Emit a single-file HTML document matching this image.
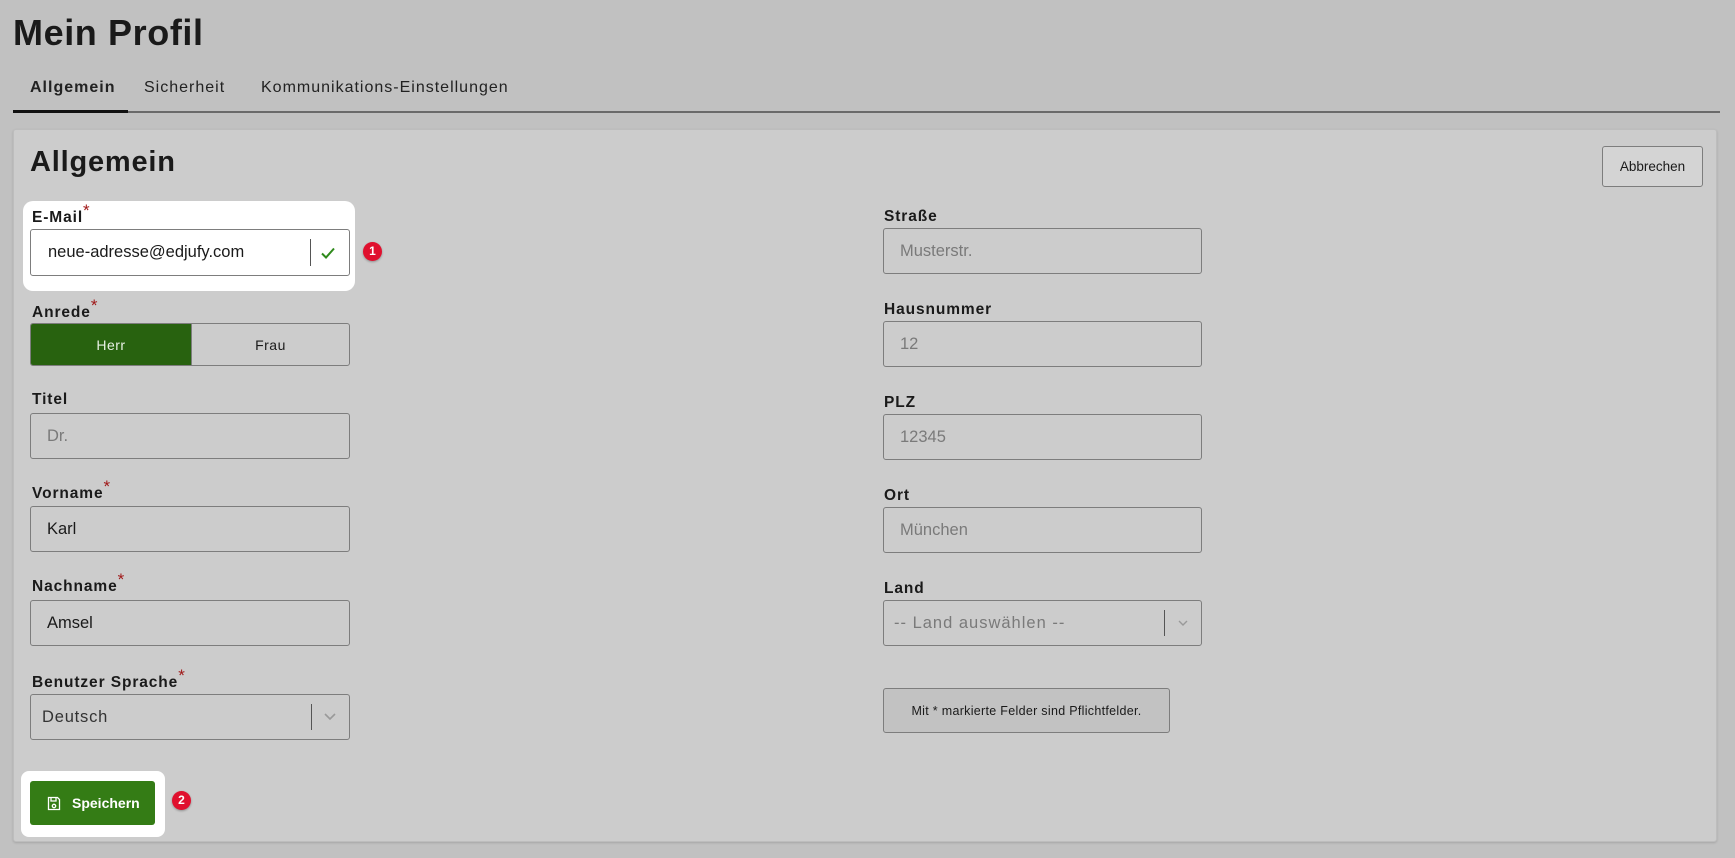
<!DOCTYPE html>
<html><head><meta charset="utf-8"><style>
*{box-sizing:border-box;margin:0;padding:0}
body{width:1735px;height:858px;background:#c1c1c1;font-family:"Liberation Sans",Arial,sans-serif;color:#1a1a1a;position:relative;overflow:hidden}
.a{position:absolute}
h1{position:absolute;left:13px;top:12px;font-size:36px;font-weight:bold;letter-spacing:0.6px}
.tab{position:absolute;top:79px;font-size:16px;color:#222;letter-spacing:1px}
.card{position:absolute;left:13px;top:129px;width:1704px;height:713px;background:#cccccc;border:1px solid #bdbdbd;border-radius:3px;box-shadow:0 1px 2px rgba(0,0,0,.15)}
h2{position:absolute;left:30px;top:146px;font-size:29px;font-weight:bold;letter-spacing:0.8px}
.lbl{position:absolute;font-size:15.5px;font-weight:bold;letter-spacing:.9px;transform:translateY(-50%)}
.lbl i{color:#a01818;font-style:normal;font-weight:normal;position:relative;top:-6px;font-size:17px;letter-spacing:0}
.inp{position:absolute;border:1px solid #7d7d7d;border-radius:3px;font-size:16.5px;color:#7a7a7a;padding-left:16px;display:flex;align-items:center}
.dark{color:#1a1a1a}
.badge{position:absolute;width:19px;height:19px;border-radius:50%;background:#e0102e;color:#fff;font-size:12px;font-weight:bold;text-align:center;line-height:19px;box-shadow:0 1px 2px rgba(0,0,0,.3)}
.sep{position:absolute;top:9px;bottom:9px;width:1px;background:#555}
</style></head><body>
<h1>Mein Profil</h1>
<div class="tab" style="left:30px;font-weight:bold">Allgemein</div>
<div class="tab" style="left:144px">Sicherheit</div>
<div class="tab" style="left:261px">Kommunikations-Einstellungen</div>
<div class="a" style="left:13px;top:111px;width:1707px;height:2px;background:#6a6a6a"></div>
<div class="a" style="left:13px;top:110px;width:115px;height:3px;background:#111"></div>

<div class="card"></div>
<h2>Allgemein</h2>
<div class="a" style="left:1602px;top:146px;width:101px;height:41px;border:1px solid #7d7d7d;border-radius:3px;background:#d4d4d4;font-size:13.5px;display:flex;align-items:center;justify-content:center">Abbrechen</div>

<div class="a" style="left:23px;top:201px;width:332px;height:90px;background:#fff;border-radius:10px"></div>
<div class="lbl" style="left:32px;top:217px">E-Mail<i>*</i></div>
<div class="inp dark" style="left:30px;top:229px;width:320px;height:47px;background:#fff;padding-left:17px">neue-adresse@edjufy.com
<div class="sep" style="left:279px"></div>
<svg class="a" style="left:288px;top:15px" width="18" height="16" viewBox="0 0 18 16"><path d="M3 8.5l4 4 8-9" fill="none" stroke="#2f8a1c" stroke-width="2"/></svg></div>
<div class="badge" style="left:363px;top:242px">1</div>

<div class="lbl" style="left:32px;top:312px">Anrede<i>*</i></div>
<div class="a" style="left:30px;top:323px;width:320px;height:43px;border:1px solid #7d7d7d;border-radius:3px;overflow:hidden;display:flex;font-size:14px;letter-spacing:.5px">
<div style="width:160px;background:#28620f;color:#e8f0e4;display:flex;align-items:center;justify-content:center">Herr</div>
<div style="flex:1;display:flex;align-items:center;justify-content:center;border-left:1px solid #7d7d7d">Frau</div></div>

<div class="lbl" style="left:32px;top:400px">Titel</div>
<div class="inp" style="left:30px;top:413px;width:320px;height:46px">Dr.</div>
<div class="lbl" style="left:32px;top:493px">Vorname<i>*</i></div>
<div class="inp dark" style="left:30px;top:506px;width:320px;height:46px">Karl</div>
<div class="lbl" style="left:32px;top:586px">Nachname<i>*</i></div>
<div class="inp dark" style="left:30px;top:600px;width:320px;height:46px">Amsel</div>
<div class="lbl" style="left:32px;top:682px">Benutzer Sprache<i>*</i></div>
<div class="inp" style="left:30px;top:694px;width:320px;height:46px;color:#333;padding-left:11px;letter-spacing:.8px">Deutsch
<div class="sep" style="left:280px"></div>
<svg class="a" style="left:292px;top:17px" width="14" height="10" viewBox="0 0 14 10"><path d="M2 2l5 5 5-5" fill="none" stroke="#999" stroke-width="1.6"/></svg></div>

<div class="a" style="left:21px;top:771px;width:144px;height:66px;background:#fff;border-radius:8px"></div>
<div class="a" style="left:30px;top:781px;width:125px;height:44px;background:#347c15;border-radius:3px;color:#fff;font-size:14px;font-weight:bold;display:flex;align-items:center;padding-left:17px">
<svg width="14" height="15" viewBox="0 0 14 15" style="margin-right:11px"><path d="M1.5 1.5h9l2 2v10h-11z M4 1.5v3.5h5v-3.5" fill="none" stroke="#fff" stroke-width="1.3"/><circle cx="7" cy="10" r="1.7" fill="none" stroke="#fff" stroke-width="1.3"/></svg>Speichern</div>
<div class="badge" style="left:172px;top:791px">2</div>

<div class="lbl" style="left:884px;top:217px">Straße</div>
<div class="inp" style="left:883px;top:228px;width:319px;height:46px">Musterstr.</div>
<div class="lbl" style="left:884px;top:310px">Hausnummer</div>
<div class="inp" style="left:883px;top:321px;width:319px;height:46px">12</div>
<div class="lbl" style="left:884px;top:403px">PLZ</div>
<div class="inp" style="left:883px;top:414px;width:319px;height:46px">12345</div>
<div class="lbl" style="left:884px;top:496px">Ort</div>
<div class="inp" style="left:883px;top:507px;width:319px;height:46px">München</div>
<div class="lbl" style="left:884px;top:589px">Land</div>
<div class="inp" style="left:883px;top:600px;width:319px;height:46px;padding-left:10px;letter-spacing:1px">-- Land auswählen --
<div class="sep" style="left:280px"></div>
<svg class="a" style="left:292px;top:18px" width="14" height="10" viewBox="0 0 14 10"><path d="M3 2l4 4 4-4" fill="none" stroke="#999" stroke-width="1.4"/></svg></div>
<div class="a" style="left:883px;top:688px;width:287px;height:45px;border:1px solid #7d7d7d;border-radius:3px;background:#c2c2c2;font-size:12.5px;letter-spacing:.3px;display:flex;align-items:center;justify-content:center">Mit * markierte Felder sind Pflichtfelder.</div>
</body></html>
